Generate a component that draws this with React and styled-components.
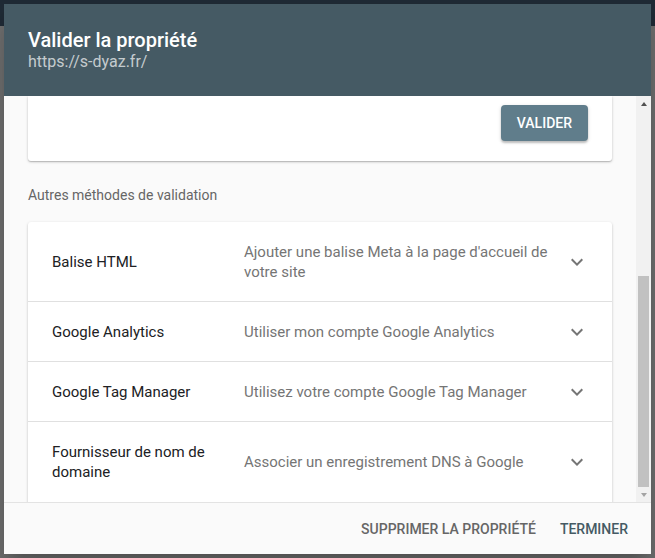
import React from "react";
import styled, { createGlobalStyle } from "styled-components";

const GlobalStyle = createGlobalStyle`
  html, body { margin: 0; padding: 0; }
  body { font-family: Roboto, "Noto Sans", "Liberation Sans", sans-serif; background: #6e6e6e; }
  * { box-sizing: border-box; }
`;

const Page = styled.div`
  position: relative;
  width: 100%;
  height: 558px;
  overflow: hidden;
  background: #6e6e6e;
`;

const UnderHeader = styled.div`
  height: 26px;
  background: #1f2a35;
`;

const Dialog = styled.div`
  position: absolute;
  top: 4px;
  left: 4px;
  right: 4px;
  height: 550px;
  display: flex;
  flex-direction: column;
  background: #fafafa;
  box-shadow: 0 11px 15px -7px rgba(0,0,0,.2), 0 24px 38px 3px rgba(0,0,0,.14);
  overflow: hidden;
`;

const Header = styled.header`
  flex: none;
  height: 92px;
  padding: 24px 24px;
  background: #455a64;
  color: #fff;
`;

const Title = styled.h2`
  margin: 0;
  font-size: 20px;
  font-weight: 500;
  line-height: 24px;
`;

const Subtitle = styled.div`
  font-size: 16px;
  line-height: 20px;
  color: rgba(255, 255, 255, 0.7);
`;

const Body = styled.div`
  flex: 1;
  min-height: 0;
  display: flex;
`;

const ScrollArea = styled.div`
  flex: 1;
  min-width: 0;
  overflow: hidden;
  padding: 0 24px;
  display: flex;
  flex-direction: column;
`;

const TopCard = styled.div`
  flex: none;
  background: #fff;
  border-radius: 0 0 3px 3px;
  box-shadow: 0 1px 3px rgba(0,0,0,.2), 0 1px 1px rgba(0,0,0,.14);
  padding: 9px 24px 20px;
  display: flex;
  justify-content: flex-end;
`;

const RaisedButton = styled.button`
  height: 36px;
  padding: 0 16px;
  border: none;
  border-radius: 4px;
  background: #607d8b;
  color: #fff;
  font-family: inherit;
  font-size: 14px;
  font-weight: 500;
  text-transform: uppercase;
  box-shadow: 0 2px 2px rgba(0,0,0,.2), 0 1px 4px rgba(0,0,0,.12);
`;

const SectionLabel = styled.div`
  margin: 24px 0 17px;
  font-size: 14px;
  line-height: 20px;
  color: #666;
`;

const ListCard = styled.div`
  flex: none;
  background: #fff;
  border-radius: 3px;
  padding-bottom: 12px;
  box-shadow: 0 1px 3px rgba(0,0,0,.2), 0 1px 1px rgba(0,0,0,.14);
`;

const Row = styled.div`
  display: grid;
  grid-template-columns: 176px 1fr 24px;
  column-gap: 16px;
  align-items: center;
  padding: 0 23px 0 24px;
  min-height: ${(p) => (p.$tall ? 80 : 60)}px;
  border-bottom: ${(p) => (p.$last ? "none" : "1px solid #e0e0e0")};
  font-size: 15px;
  line-height: 20px;
`;

const RowTitle = styled.div`
  color: #202124;
`;

const RowDesc = styled.div`
  color: #757575;
`;

const Chevron = styled.svg`
  width: 24px;
  height: 24px;
  fill: #757575;
`;

const ScrollBar = styled.div`
  flex: none;
  width: 15px;
  background: #f1f1f1;
  display: flex;
  flex-direction: column;
`;

const ArrowBtn = styled.div`
  flex: none;
  height: 15px;
  display: flex;
  align-items: center;
  justify-content: center;
`;

const Arrow = styled.div`
  width: 0;
  height: 0;
  border-left: 3.5px solid transparent;
  border-right: 3.5px solid transparent;
  ${(p) =>
    p.$dir === "up"
      ? `border-bottom: 4px solid ${p.$color};`
      : `border-top: 4px solid ${p.$color};`}
`;

const Track = styled.div`
  flex: 1;
  display: flex;
  flex-direction: column;
  justify-content: flex-end;
  padding: 0 2px;
`;

const Thumb = styled.div`
  height: 211px;
  background: #c1c1c1;
`;

const Footer = styled.footer`
  flex: none;
  height: 52px;
  border-top: 1px solid #e3e3e3;
  background: #fafafa;
  display: flex;
  align-items: center;
  justify-content: flex-end;
  gap: 8px;
  padding: 0 15px 0 8px;
`;

const FlatButton = styled.button`
  height: 36px;
  padding: 0 8px;
  border: none;
  background: transparent;
  font-family: inherit;
  font-size: 14px;
  font-weight: 500;
  text-transform: uppercase;
  color: ${(p) => (p.$primary ? "#455a64" : "#666")};
`;

const methods = [
  { title: "Balise HTML", desc: "Ajouter une balise Meta à la page d'accueil de votre site", tall: true },
  { title: "Google Analytics", desc: "Utiliser mon compte Google Analytics" },
  { title: "Google Tag Manager", desc: "Utilisez votre compte Google Tag Manager" },
  { title: "Fournisseur de nom de domaine", desc: "Associer un enregistrement DNS à Google", tall: true },
];

const ExpandMore = () => (
  <Chevron viewBox="0 0 24 24">
    <path d="M16.59 8.59L12 13.17 7.41 8.59 6 10l6 6 6-6z" />
  </Chevron>
);

export default function App() {
  return (
    <>
      <GlobalStyle />
      <Page>
        <UnderHeader />
        <Dialog>
          <Header>
            <Title>Valider la propriété</Title>
            <Subtitle>https://s-dyaz.fr/</Subtitle>
          </Header>
          <Body>
            <ScrollArea>
              <TopCard>
                <RaisedButton>Valider</RaisedButton>
              </TopCard>
              <SectionLabel>Autres méthodes de validation</SectionLabel>
              <ListCard>
                {methods.map((m, i) => (
                  <Row key={m.title} $tall={m.tall} $last={i === methods.length - 1}>
                    <RowTitle>{m.title}</RowTitle>
                    <RowDesc>{m.desc}</RowDesc>
                    <ExpandMore />
                  </Row>
                ))}
              </ListCard>
            </ScrollArea>
            <ScrollBar>
              <ArrowBtn>
                <Arrow $dir="up" $color="#505050" />
              </ArrowBtn>
              <Track>
                <Thumb />
              </Track>
              <ArrowBtn>
                <Arrow $dir="down" $color="#a3a3a3" />
              </ArrowBtn>
            </ScrollBar>
          </Body>
          <Footer>
            <FlatButton>Supprimer la propriété</FlatButton>
            <FlatButton $primary>Terminer</FlatButton>
          </Footer>
        </Dialog>
      </Page>
    </>
  );
}
